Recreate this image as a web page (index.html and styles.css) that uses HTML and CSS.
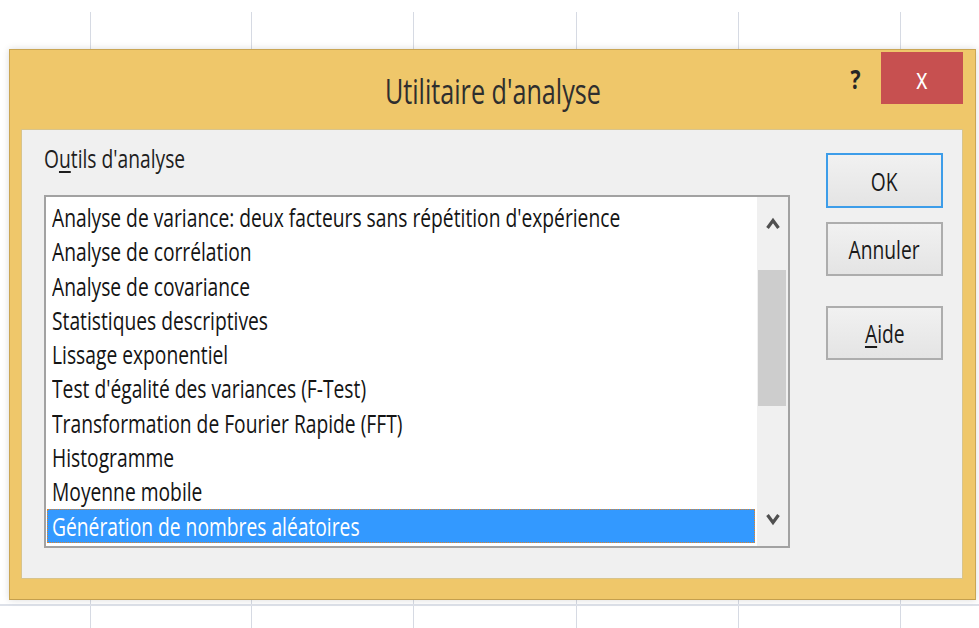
FILE: index.html
```html
<!DOCTYPE html>
<html lang="fr">
<head>
<meta charset="utf-8">
<title>Utilitaire d'analyse</title>
<link rel="stylesheet" href="styles.css">
</head>
<body>
  <div class="sheet">
    <div class="sheet-row head"></div>
    <div class="sheet-row cells">
      <div class="cell first"></div><div class="cell"></div><div class="cell"></div><div class="cell"></div><div class="cell"></div><div class="cell"></div><div class="cell"></div>
    </div>
    <div class="sheet-row cells lower">
      <div class="cell first"></div><div class="cell"></div><div class="cell"></div><div class="cell"></div><div class="cell"></div><div class="cell"></div><div class="cell"></div>
    </div>
  </div>

  <div class="dialog">
    <div class="titlebar">
      <div class="title"><span class="t tc">Utilitaire d'analyse</span></div>
      <div class="controls">
        <span class="help">?</span>
        <button class="close" type="button"><span class="t tc">x</span></button>
      </div>
    </div>

    <div class="client">
      <div class="main">
        <div class="label"><span class="t">O<u>u</u>tils d'analyse</span></div>
        <div class="listbox">
          <ul class="items">
            <li><span class="t">Analyse de variance: deux facteurs sans répétition d'expérience</span></li>
            <li><span class="t">Analyse de corrélation</span></li>
            <li><span class="t">Analyse de covariance</span></li>
            <li><span class="t">Statistiques descriptives</span></li>
            <li><span class="t">Lissage exponentiel</span></li>
            <li><span class="t">Test d'égalité des variances (F-Test)</span></li>
            <li><span class="t">Transformation de Fourier Rapide (FFT)</span></li>
            <li><span class="t">Histogramme</span></li>
            <li><span class="t">Moyenne mobile</span></li>
            <li class="selected"><span class="t">Génération de nombres aléatoires</span></li>
          </ul>
          <div class="scrollbar">
            <div class="arrow">
              <svg width="14" height="14" viewBox="0 0 14 14"><path d="M1.5 11 L7 3.5 L12.5 11" fill="none" stroke="#505050" stroke-width="3.2"/></svg>
            </div>
            <div class="track"><div class="thumb"></div></div>
            <div class="arrow">
              <svg width="14" height="14" viewBox="0 0 14 14"><path d="M1.5 3 L7 10.5 L12.5 3" fill="none" stroke="#505050" stroke-width="3.2"/></svg>
            </div>
          </div>
        </div>
      </div>

      <div class="buttons">
        <button class="btn default" type="button"><span class="t tc">OK</span></button>
        <button class="btn" type="button"><span class="t tc">Annuler</span></button>
        <button class="btn help-btn" type="button"><span class="t tc"><u>A</u>ide</span></button>
      </div>
    </div>
  </div>
</body>
</html>
```

FILE: styles.css
```css
* {
  box-sizing: border-box;
}

html,
body {
  margin: 0;
  padding: 0;
}

body {
  position: relative;
  width: 979px;
  height: 628px;
  overflow: hidden;
  background: #ffffff;
  font-family: "Open Sans", "Segoe UI", sans-serif;
  color: #1b1b1b;
}

/* spreadsheet behind the dialog */
.sheet {
  display: grid;
  grid-template-rows: 12px 592px 24px;
  height: 628px;
}

.sheet-row.cells {
  display: grid;
  grid-template-columns: 90px 161px 162px 163px 162px 162px 1fr;
}

.sheet-row.lower {
  border-top: 2px solid #dde1e9;
}

.cell {
  border-left: 1px solid #d6dae3;
}

.cell.first {
  border-left: none;
}

/* narrow text: glyphs are drawn condensed */
.t {
  display: inline-block;
  white-space: nowrap;
  transform: scaleX(0.74);
  transform-origin: 0 50%;
}

.t.tc {
  transform-origin: 50% 50%;
}

u {
  text-decoration-thickness: 2px;
  text-underline-offset: 3px;
}

/* dialog window */
.dialog {
  position: absolute;
  left: 9px;
  top: 49px;
  width: 967px;
  height: 551px;
  display: flex;
  flex-direction: column;
  padding: 0 12px 20px 11px;
  background: #efc76a;
  border: 1px solid #caa654;
  border-bottom-color: #c49f4e;
  box-shadow: 0 0 7px rgba(0, 0, 0, 0.14);
}

.titlebar {
  display: grid;
  grid-template-columns: 1fr auto 1fr;
  height: 79px;
  margin: 0 -12px 0 -11px;
}

.title {
  grid-column: 2;
  padding-top: 19px;
  font-size: 34px;
  line-height: 44px;
  color: #2e2e2e;
}

.controls {
  grid-column: 3;
  display: flex;
  justify-content: flex-end;
  align-items: flex-start;
  padding-right: 12px;
}

.help {
  margin-top: 14px;
  margin-right: 19px;
  font-size: 27px;
  line-height: 30px;
  font-weight: 700;
  color: #262626;
  transform: scaleX(0.78);
}

.close {
  width: 82px;
  height: 52px;
  margin-top: 2px;
  padding: 0;
  border: none;
  background: #c75050;
  color: #ffffff;
  font-family: inherit;
  font-size: 30px;
  line-height: 44px;
}

.client {
  flex: 1;
  display: flex;
  background: #f0f0f0;
  border: 1px solid #d8c48c;
  padding-top: 11px;
}

.main {
  flex: none;
  padding-left: 22px;
}

.label {
  height: 34px;
  margin-bottom: 20px;
  font-size: 26px;
  line-height: 34px;
  color: #1e1e1e;
}

.listbox {
  display: flex;
  width: 746px;
  height: 353px;
  border: 2px solid #a2a2a2;
  background: #ffffff;
}

.items {
  flex: 1;
  min-width: 0;
  margin: 0;
  padding: 3px 2px 0 1px;
  list-style: none;
  font-size: 26px;
}

.items li {
  height: 34.3px;
  line-height: 34px;
  padding-left: 5px;
  color: #141414;
}

.items li.selected {
  background: #3399ff;
  color: #ffffff;
  outline: 1px dotted #e0832a;
  outline-offset: -1px;
}

.scrollbar {
  flex: none;
  display: flex;
  flex-direction: column;
  width: 31px;
  background: #f0f0f0;
}

.arrow {
  display: flex;
  align-items: center;
  justify-content: center;
  height: 54px;
}

.track {
  flex: 1;
  padding: 19px 2px 0 1px;
}

.thumb {
  height: 136px;
  background: #cdcdcd;
}

/* command buttons */
.buttons {
  flex: none;
  display: flex;
  flex-direction: column;
  margin-left: 36px;
  padding-top: 12px;
}

.btn {
  width: 117px;
  height: 54px;
  padding: 0;
  border: 2px solid #adadad;
  background: linear-gradient(#f1f1f1, #e4e4e4);
  font-family: inherit;
  font-size: 26px;
  line-height: 30px;
  color: #1a1a1a;
}

.btn.default {
  height: 55px;
  margin-bottom: 14px;
  border-color: #3d9de9;
}

.btn.help-btn {
  margin-top: 30px;
}
```
